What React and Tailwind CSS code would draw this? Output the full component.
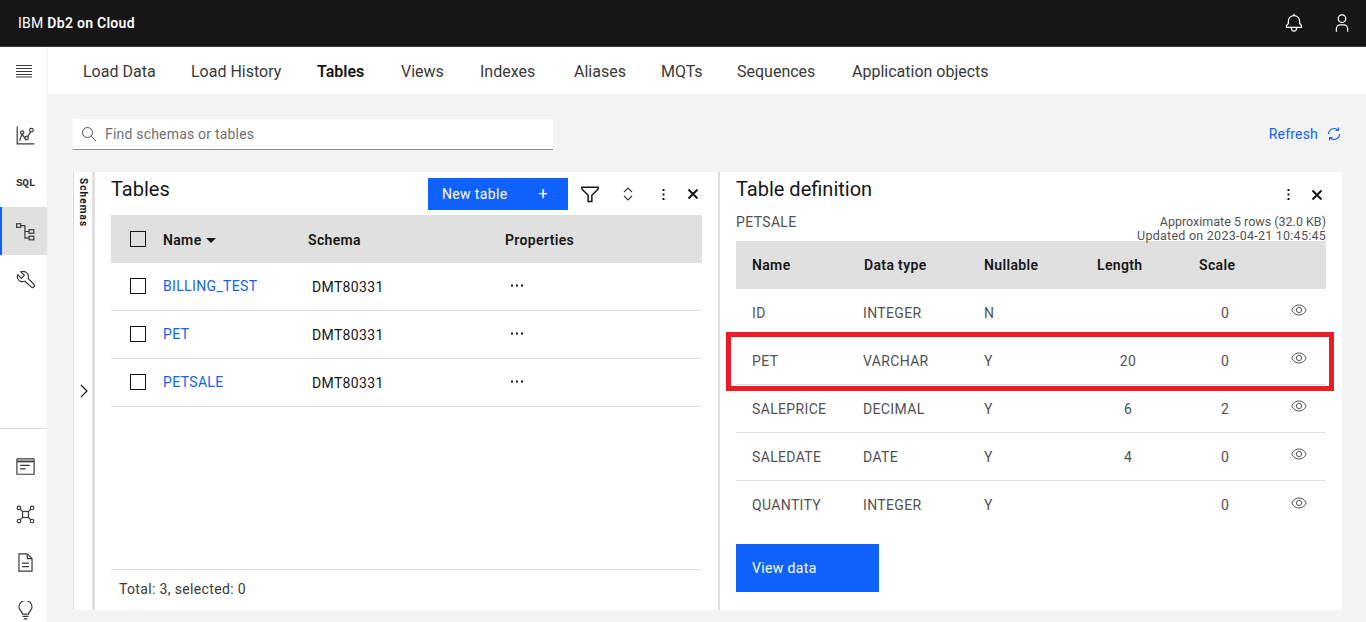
import React from 'react';

const FONT = "font-['Roboto','Liberation_Sans',sans-serif]";

const Ico = ({ size = 20, className = '', children, vb = 32 }) => (
  <svg width={size} height={size} viewBox={`0 0 ${vb} ${vb}`} fill="currentColor" className={className}>{children}</svg>
);

const Line = ({ size = 19, className = '', sw = 2, children }) => (
  <svg width={size} height={size} viewBox="0 0 32 32" fill="none" stroke="currentColor" strokeWidth={sw} className={className}>{children}</svg>
);

const Bell = () => (
  <Ico size={20}><path d="M28.7071,19.293,26,16.5859V13a10.0136,10.0136,0,0,0-9-9.9492V1H15V3.0508A10.0136,10.0136,0,0,0,6,13v3.5859L3.2929,19.293A1,1,0,0,0,3,20v3a1,1,0,0,0,1,1h7v.7768a5.152,5.152,0,0,0,4.5,5.1987A5.0057,5.0057,0,0,0,21,25V24h7a1,1,0,0,0,1-1V20A1,1,0,0,0,28.7071,19.293ZM19,25a3,3,0,0,1-6,0V24h6Zm8-3H5V20.4141L7.707,17.707A1,1,0,0,0,8,17V13a8,8,0,0,1,16,0v4a1,1,0,0,0,.293.707L27,20.4141Z" /></Ico>
);
const User = () => (
  <Ico size={20}>
    <path d="M16,4a5,5,0,1,1-5,5,5,5,0,0,1,5-5m0-2a7,7,0,1,0,7,7A7,7,0,0,0,16,2Z" />
    <path d="M26,30H24V25a5,5,0,0,0-5-5H13a5,5,0,0,0-5,5v5H6V25a7,7,0,0,1,7-7h6a7,7,0,0,1,7,7Z" />
  </Ico>
);
const Menu = () => (
  <svg width="16" height="14" viewBox="0 0 16 14" fill="currentColor">
    <rect y="1" width="16" height="1" /><rect y="4" width="16" height="1" /><rect y="7" width="16" height="1" /><rect y="10" width="16" height="1" /><rect y="12.5" width="16" height="1" />
  </svg>
);
const ChartIcon = () => (
  <Line>
    <path d="M2 1v29h29" />
    <path d="M6 25l4-11 7 9 8-14" />
    <circle cx="10.500" cy="11" r="2.800" fill="#fff" /><circle cx="18" cy="20" r="2.800" fill="#fff" /><circle cx="26" cy="7" r="3" fill="#fff" />
  </Line>
);
const TreeIcon = () => (
  <Line>
    <rect x="1" y="3" width="7" height="6" /><rect x="22" y="13" width="8" height="6" /><rect x="22" y="24" width="8" height="6" />
    <path d="M8 6h7v21h7M15 16h7" />
  </Line>
);
const Wrench = () => (
  <Line>
    <path d="M3 8l6 6 5-5-6-6c6-2 13 1 13 8 0 1 0 2-.5 3L30 24c1.500 1.500 1 3.500 0 4.500s-3 1.500-4.500 0L15 19c-6 2-13-1-13-8 0-1 .3-2 1-3z" />
  </Line>
);
const Terminal = () => (
  <Line>
    <rect x="1.500" y="3" width="29" height="26" rx="1" />
    <path d="M2 7.500h28" strokeWidth="3" /><path d="M7 14h16M7 20h9" />
  </Line>
);
const Network = () => (
  <Line>
    <circle cx="5" cy="5" r="3" /><circle cx="27" cy="5" r="3" /><circle cx="5" cy="27" r="3" /><circle cx="27" cy="27" r="3" />
    <rect x="11" y="11" width="10" height="10" />
    <path d="M7 7l4 4M25 7l-4 4M7 25l4-4M25 25l-4-4" />
  </Line>
);
const Doc = () => (
  <Line>
    <path d="M5 1.500h14l8 8v21H5z" /><path d="M19 1.500v8h8M10 17h12M10 23h12" />
  </Line>
);
const Bulb = () => (
  <Line>
    <path d="M11 22c0-4-6-6-6-12a11 11 0 0 1 22 0c0 6-6 8-6 12z" /><path d="M11 26h10M13 30h6" />
  </Line>
);
const Search = () => (
  <Line size={16}>
    <circle cx="13" cy="13" r="10" /><path d="M20.500 20.500L30 30" />
  </Line>
);
const Refresh = () => (
  <Line size={16} sw={2.2}>
    <path d="M27 16a11 11 0 0 1-19 7.500M5 16A11 11 0 0 1 24 8.500" />
    <path d="M25 3v6h-6M7 29v-6h6" />
  </Line>
);
const Funnel = () => (
  <Line size={20} sw={2.4}>
    <path d="M3 5h26v3L19 18v10h-6V18L3 8z" />
  </Line>
);
const Sort = () => (
  <svg width="10" height="14" viewBox="0 0 10 14" fill="none" stroke="currentColor" strokeWidth="1.100">
    <path d="M1 5l4-4 4 4M1 9l4 4 4-4" />
  </svg>
);
const Kebab = () => (
  <svg width="3" height="11" viewBox="0 0 3 11" fill="currentColor">
    <rect x=".5" width="2" height="2" /><rect x=".5" y="4.500" width="2" height="2" /><rect x=".5" y="9" width="2" height="2" />
  </svg>
);
const Close = () => (
  <svg width="10" height="10" viewBox="0 0 10 10" fill="none" stroke="currentColor" strokeWidth="2">
    <path d="M.5 .5l9 9M9.500 .5l-9 9" />
  </svg>
);
const Eye = () => (
  <svg width="16" height="14" viewBox="0 0 16 14" fill="none" stroke="currentColor" strokeWidth="1">
    <path d="M.8 7C2.500 3.500 5 2 8 2s5.500 1.500 7.200 5C13.500 10.500 11 12 8 12S2.500 10.500 .8 7z" />
    <circle cx="8" cy="7" r="2.600" />
  </svg>
);
const Dots = () => (
  <svg width="12" height="3" viewBox="0 0 12 3" fill="currentColor">
    <rect x="0" y=".5" width="2" height="2" /><rect x="5" y=".5" width="2" height="2" /><rect x="10" y=".5" width="2" height="2" />
  </svg>
);

const SideItem = ({ active, children }) => (
  <div className={`h-12 flex items-center justify-center shrink-0 text-[#393939] ${active ? 'bg-[#e0e0e0] border-l-2 border-[#0f62fe] pl-[2px]' : 'pl-1'}`}>{children}</div>
);

const navItems = [
  ['Load Data', 'w-[108px]'], ['Load History', 'w-[126px]'], ['Tables', 'w-[84px] font-semibold text-[#161616]'],
  ['Views', 'w-[79px]'], ['Indexes', 'w-[94px]'], ['Aliases', 'w-[87px]'], ['MQTs', 'w-[76px]'],
  ['Sequences', 'w-[115px]'], ['Application objects', 'w-[180px]'],
];

const tables = ['BILLING_TEST', 'PET', 'PETSALE'];

const columns = [
  ['ID', 'INTEGER', 'N', '', '0'],
  ['PET', 'VARCHAR', 'Y', '20', '0'],
  ['SALEPRICE', 'DECIMAL', 'Y', '6', '2'],
  ['SALEDATE', 'DATE', 'Y', '4', '0'],
  ['QUANTITY', 'INTEGER', 'Y', '', '0'],
];

const Checkbox = () => <div className="w-4 h-4 border border-[#161616] shrink-0 -mt-[2px]" />;

function TablesPanel() {
  return (
    <div className="w-[625px] shrink-0 flex flex-col pl-4 pr-4 border-r-2 border-[#e0e0e0]">
      <div className="h-[43px] flex items-start relative">
        <h2 className="text-xl leading-none mt-[7px] text-[#161616] flex-1 tracking-normal">Tables</h2>
        <button className="w-[140px] h-8 mt-[6px] bg-[#0f62fe] text-white text-sm flex items-center justify-between pl-[14px] pr-5">
          New table
          <span className="text-base leading-none">+</span>
        </button>
        <div className="w-[134px] h-8 mt-[6px] flex items-center text-[#161616]">
          <span className="ml-[12px] w-5"><Funnel /></span>
          <span className="ml-[23px] w-[10px] text-[#393939]"><Sort /></span>
          <span className="ml-[29px] w-[3px]"><Kebab /></span>
          <span className="ml-[23px] w-[10px]"><Close /></span>
        </div>
      </div>
      <div className="h-12 bg-[#e0e0e0] flex items-center pt-[2px] text-sm font-semibold text-[#161616] shrink-0">
        <div className="w-[52px] pl-[19px]"><Checkbox /></div>
        <div className="w-[145px] flex items-center gap-[4px]">Name
          <svg width="10" height="5" viewBox="0 0 10 5" fill="currentColor"><path d="M0 0h10L5 5z" /></svg>
        </div>
        <div className="w-[197px]">Schema</div>
        <div>Properties</div>
      </div>
      {tables.map((t) => (
        <div key={t} className="h-12 flex items-center border-b border-[#e0e0e0] text-sm shrink-0">
          <div className="w-[52px] pl-[19px]"><Checkbox /></div>
          <div className="w-[149px] text-[#0f62fe] -mt-[2px]">{t}</div>
          <div className="w-[199px] text-[#161616]">DMT80331</div>
          <div className="text-[#161616] -mt-[2px]"><Dots /></div>
        </div>
      ))}
      <div className="mt-auto h-[41px] border-t border-[#e0e0e0] flex items-center pl-2 pb-[2px] text-sm text-[#393939]">Total: 3, selected: 0</div>
    </div>
  );
}

function DefinitionPanel() {
  return (
    <div className="flex-1 min-w-0 relative flex flex-col px-4">
      <div className="h-[69px] relative shrink-0">
        <div className="flex items-start">
          <h2 className="text-xl leading-none mt-[7px] text-[#161616] flex-1 tracking-normal">Table definition</h2>
          <div className="flex items-center gap-[22px] mt-[17px] mr-[4px] text-[#161616]"><Kebab /><Close /></div>
        </div>
        <div className="flex justify-between items-start">
          <span className="text-sm text-[#525252] mt-[12px]">PETSALE</span>
          <div className="text-right text-[12.500px] leading-[14px] text-[#525252] mt-[15px]">
            <div className="tracking-normal">Approximate 5 rows (32.0 KB)</div>
            <div className="tracking-[.25px]">Updated on 2023-04-21 10:45:45</div>
          </div>
        </div>
      </div>
      <div className="h-12 bg-[#e0e0e0] grid grid-cols-[112px_120px_113px_102px_1fr] items-center text-sm font-semibold text-[#161616] pl-4 shrink-0">
        <div>Name</div><div>Data type</div><div>Nullable</div><div>Length</div><div>Scale</div>
      </div>
      {columns.map((c, i) => (
        <div key={c[0]} className={`h-12 grid grid-cols-[111px_121px_113px_62px_132px_1fr] items-center text-sm text-[#525252] pl-4 shrink-0 ${i < 4 ? 'border-b border-[#e0e0e0]' : ''}`}>
          <div>{c[0]}</div><div>{c[1]}</div><div>{c[2]}</div>
          <div className="text-center">{c[3]}</div>
          <div className="text-center">{c[4]}</div>
          <div className="-mt-[5px]"><Eye /></div>
        </div>
      ))}
      <button className="w-[143px] h-12 mt-[15px] bg-[#0f62fe] text-white text-sm text-left pl-4 shrink-0">View data</button>
      {/* annotation box drawn over the PET row */}
      <div className="absolute left-[6px] top-[160px] w-[608px] h-[59px] border-[5px] border-[#ed1c24]" />
    </div>
  );
}

export default function App() {
  return (
    <div className={`w-[1366px] h-[622px] overflow-hidden flex flex-col bg-[#f4f4f4] ${FONT}`}>
      <header className="h-[47px] shrink-0 bg-[#161616] text-white flex items-center justify-between pl-[18px] pr-[14px] border-b border-[#393939]">
        <span className="text-sm tracking-[.28px]"><span>IBM </span><span className="font-semibold">Db2 on Cloud</span></span>
        <div className="flex items-center gap-[28px]"><Bell /><User /></div>
      </header>
      <div className="flex-1 flex min-h-0">
        <aside className="w-12 shrink-0 bg-white flex flex-col border-r border-[#f0f0f0]">
          <div className="h-[47px] flex items-center justify-center text-[#393939] shrink-0"><Menu /></div>
          <div className="h-[17px] shrink-0" />
          <SideItem><ChartIcon /></SideItem>
          <SideItem><span className="text-[11px] font-bold tracking-tight font-['Liberation_Mono',monospace]">SQL</span></SideItem>
          <SideItem active><TreeIcon /></SideItem>
          <SideItem><Wrench /></SideItem>
          <div className="h-[126px] shrink-0 border-b border-[#e0e0e0]" />
          <div className="h-[13px] shrink-0" />
          <SideItem><Terminal /></SideItem>
          <SideItem><Network /></SideItem>
          <SideItem><Doc /></SideItem>
          <SideItem><Bulb /></SideItem>
        </aside>
        <main className="flex-1 min-w-0 flex flex-col">
          <nav className="h-[47px] shrink-0 bg-white flex items-center pl-[35px] pt-[2px] text-base text-[#393939]">
            {navItems.map(([label, cls]) => (
              <span key={label} className={`whitespace-nowrap ${cls}`}>{label}</span>
            ))}
          </nav>
          <div className="flex items-start justify-between pt-[25px] pl-[25px] pr-[24px] shrink-0 tracking-[.2px]">
            <div className="w-[480px] h-[31px] bg-white border-b border-[#8d8d8d] flex items-center pl-2 gap-[8px] text-sm text-[#6f6f6f]">
              <span className="text-[#525252]"><Search /></span>Find schemas or tables
            </div>
            <div className="h-[30px] flex items-center gap-[8px] text-sm text-[#0f62fe]">Refresh <Refresh /></div>
          </div>
          <section className="flex h-[438px] mt-[22px] ml-[25px] mr-[24px] bg-white shrink-0 tracking-[.35px]">
            <div className="w-[22px] shrink-0 border-l border-[#e0e0e0] border-r-[3px] relative flex justify-center">
              <span className="absolute top-[6px] left-[2px] text-[10px] font-bold text-[#161616] tracking-[1.1px] [writing-mode:vertical-rl]">Schemas</span>
              <svg className="absolute top-[212px] left-[6px] text-[#161616]" width="8" height="14" viewBox="0 0 8 14" fill="none" stroke="currentColor" strokeWidth="1.200"><path d="M1 1l6 6-6 6" /></svg>
            </div>
            <TablesPanel />
            <DefinitionPanel />
          </section>
        </main>
      </div>
    </div>
  );
}
